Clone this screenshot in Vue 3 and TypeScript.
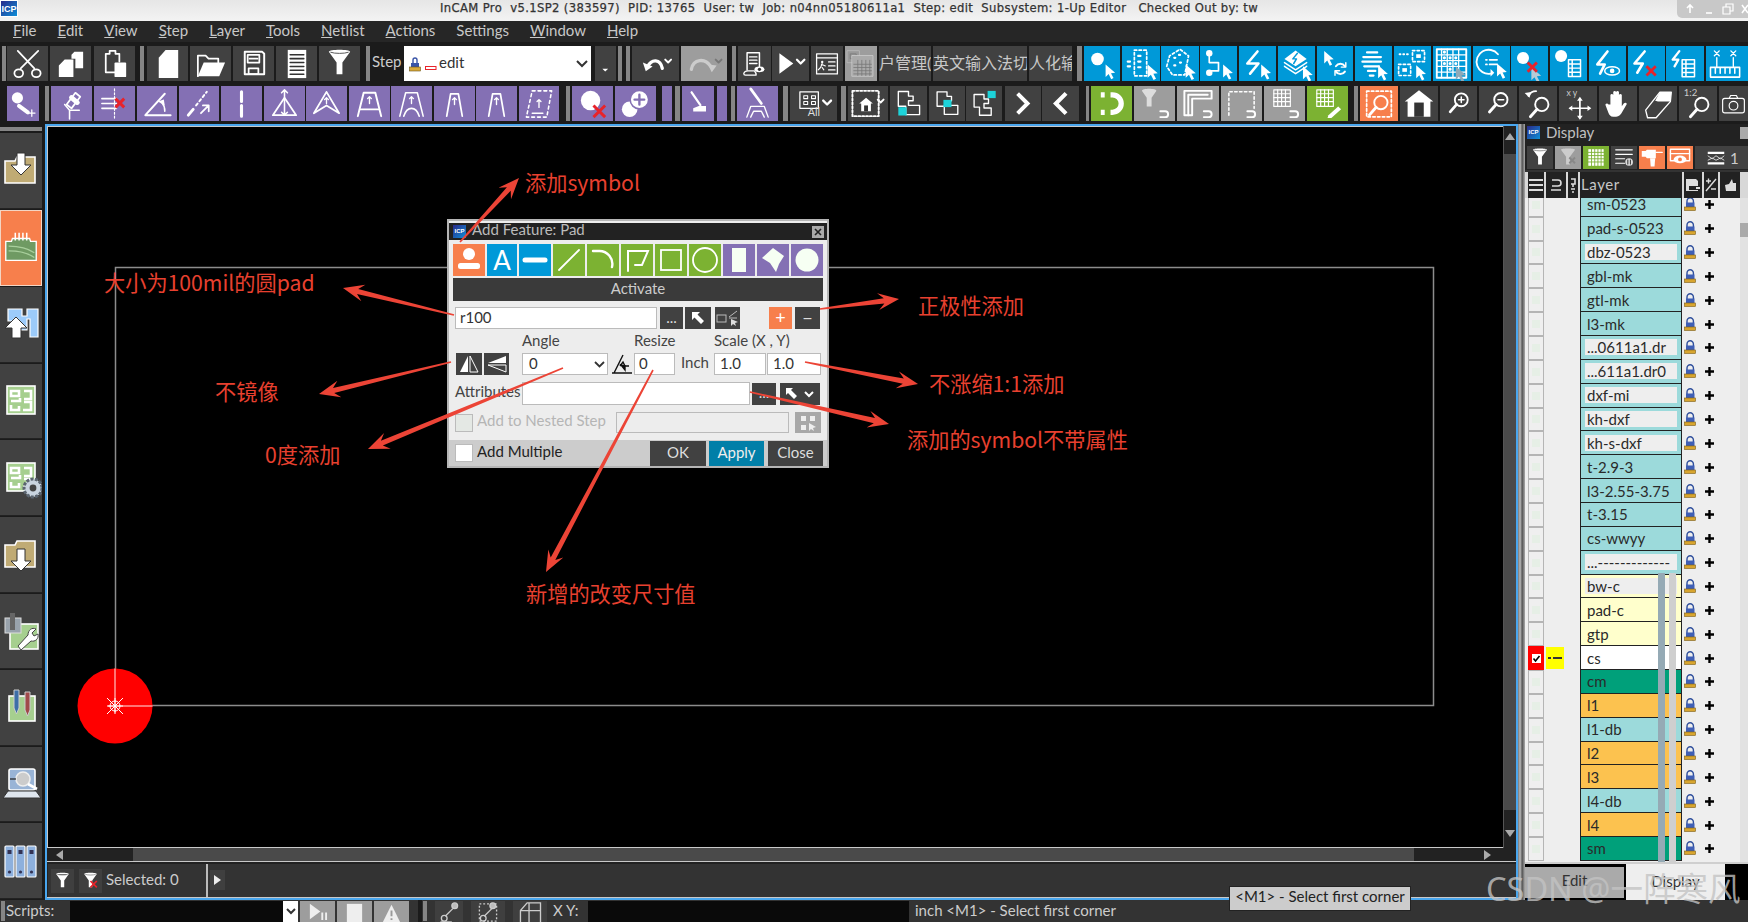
<script setup lang="ts">
type Tool = [number, number, string, string?, string?]

// shared little pieces for the icon strings
const cur = (x: number, y: number, c = '#fff') =>
  `<path d="M${x} ${y}v14l3.4-3.2 2.8 5.6 2.6-1.3-2.8-5.4 4.6-.4z" fill="${c}" stroke="none"/>`
const rx = (x: number, y: number, s = 9) =>
  `<path d="M${x} ${y}l${s} ${s}m0-${s}l-${s} ${s}" stroke="#e8232a" stroke-width="3" stroke-linecap="butt"/>`
const dash = 'stroke-dasharray="2.5 2.5"'
const table = (x: number, y: number) =>
  `<path d="M${x} ${y}h13v18h-13zM${x} ${y + 4.5}h13M${x} ${y + 9}h13M${x} ${y + 13.5}h13M${x + 4} ${y}v18" stroke-width="1.6"/>`
const hook = `<path d="M26 26h5a3 3 0 0 1 0 6h-5" stroke-width="2"/>`
const funnel = `<path d="M9 6c0-3 22-3 22 0l-8 11v12h-6V17z" fill="#fff" stroke="none"/><path d="M11 6.500c4 1.500 14 1.500 18 0" stroke="#555" stroke-width="1"/>`
const trap = (a: string) => `<path d="M12 31l4-23h8l4 23" stroke-width="1.8"/><path d="M${a}" stroke-width="1.3" ${dash}/><path d="M20 19v-7m-2 2l2-2 2 2" stroke-width="1.4"/>`
const lens = (x: number, y: number) =>
  `<circle cx="${x}" cy="${y}" r="7" stroke-width="2"/><path d="M${x - 5} ${y + 5}l-7 8" stroke-width="3"/>`
const folder = '<path d="M5 34V12h10l2-4h18v26z" fill="#c0ab74" stroke="#fff" stroke-width="1.6"/>'
const maze = '<rect x="7" y="6" width="28" height="28" fill="#a6cf8f" stroke="#fff" stroke-width="1.6"/><path d="M11 11h8v5h-8zM24 11h7v8h-7M11 21h9v-3M11 25v5h8v-4M24 22h7v8h-8" stroke="#fff" stroke-width="2.6" fill="none"/>'

const icons: Record<string, string> = {
  // row 1, dark
  scissors: '<path d="M10 5l17 18M31 5L13 23" stroke-width="1.800"/><ellipse cx="11" cy="28" rx="4.5" ry="4" stroke-width="1.800"/><ellipse cx="29" cy="28" rx="4.5" ry="4" stroke-width="1.800"/>',
  copy: '<path d="M14 14h9v18H8V20zM24 6h9v17h-8V13h-4V9z" fill="#fff" stroke="none"/>',
  paste: '<path d="M24 27h-13V8h4V5h6v3h4v8" stroke-width="1.8"/><rect x="20" y="17" width="12" height="15" rx="1" fill="#fff" stroke="none"/>',
  newdoc: '<path d="M18 4h13v29H11V12z" fill="#fff" stroke="none"/>',
  open: '<path d="M7 31V10h8l3 3h10v4" stroke-width="1.8"/><path d="M7 31l6-14h22l-6 14z" fill="#fff" stroke="none"/>',
  save: '<path d="M11 6h18l2 2v21H11z" stroke-width="2"/><path d="M14 9h12v8H14zM15 23h10v6H15z" stroke-width="1.8"/><path d="M16 13h8"/>',
  listdoc: '<rect x="11" y="4" width="19" height="29" fill="#fff" stroke="none"/><path d="M13.5 9h14M13.5 13h14M13.5 17h14M13.5 21h14M13.5 25h14M13.5 29h14" stroke="#333" stroke-width="1.6"/>',
  filter: funnel,
  undo: '<path d="M7 17l3 9 7-5z" fill="#fff" stroke="none"/><path d="M12 21c4-8 13-8 15 2" stroke-width="3.4"/><path d="M30 14l3 3 3-3"/>',
  redo: '<path d="M24 19l4 8 5-7z" fill="#ccc" stroke="none"/><path d="M7 24c2-11 14-12 20-3" stroke="#ccc" stroke-width="3.4"/><path d="M32 14l3 3 3-3" stroke="#777"/>',
  scripteye: '<path d="M11 26V5h15v19" stroke-width="1.8"/><path d="M14 10h9M14 14h9M14 18h9M7 30c1-3 3-3 5-3h8c2 2 2 4 2 5H9c-2 0-2-1-2-2z" stroke-width="1.6"/><ellipse cx="26" cy="25" rx="6" ry="3.5" fill="#fff" stroke="none"/><circle cx="26" cy="25" r="2" fill="#333" stroke="none"/>',
  play: '<path d="M8 7l15 11-15 11z" fill="#fff" stroke="none"/><path d="M27 14l4 4 4-4" stroke-width="2.4"/>',
  runwin: '<rect x="7" y="6" width="26" height="25" stroke-width="1.6"/><path d="M7 11h26M22 16h8M22 21h8M22 26h8" stroke-width="1.6"/><circle cx="14" cy="16" r="1.5" fill="#fff" stroke="none"/><path d="M14 18l-2 5-3 3m5-3l2 3m-3-7l5 2" stroke-width="1.4"/>',
  sheets: '<rect x="3" y="2" width="15" height="15" fill="#999" stroke="#bbb" stroke-width="1"/><path d="M7 6h7v6H7z" stroke="#777" stroke-width="1"/><rect x="9" y="8" width="26" height="26" fill="#aaa" stroke="#ccc" stroke-width="1"/><path d="M11 19h22M11 23h22M11 27h22M11 31h22M16 14v19M21 14v19M26 14v19M31 14v19" stroke="#777" stroke-width="1"/>',
  // row 1, blue
  b1: `<circle cx="15" cy="13" r="7" fill="#fff" stroke="none"/>${cur(24, 19)}`,
  b2: `<rect x="13" y="4" width="13" height="27" stroke-width="1.8" ${dash}/><path d="M17 10h5M17 16h5M17 22h5M6 16h3M6 21h3" stroke-width="2.2" ${dash}/>${cur(27, 19)}`,
  b3: `<path d="M6 21l3-11 11-7 9 7-4 20H12z" stroke-width="1.8" ${dash}/><path d="M14 12h1M19 9h1M14 20h1M20 17h1" stroke-width="2.4"/>${cur(26, 19)}`,
  b4: `<circle cx="10" cy="7" r="3.5" fill="#fff" stroke="none"/><circle cx="10" cy="28" r="3.5" fill="#fff" stroke="none"/><path d="M10 8v9h10v9h-8" stroke-width="1.8"/>${cur(25, 19)}`,
  b5: `<path d="M20 5l-11 13h12l-9 11" stroke-width="2.800"/>${cur(24, 19)}`,
  b6: `<path d="M7 13l12-9 12 9-12 8z" fill="#fff" stroke="none"/><path d="M21 7l-5 6h4l-3 5" stroke="#0099d8" stroke-width="1.6"/><path d="M7 17l12 8 12-8M7 21l12 8 12-8" stroke-width="1.6"/>${cur(27, 21)}`,
  b7: `${cur(8, 4)}<path d="M21 21a6 6 0 0 1 10 0M31 27a6 6 0 0 1-10 0" stroke-width="2.2"/><path d="M32 17v5h-5M20 31v-5h5" stroke-width="1.6"/>`,
  b8: `<path d="M13 6h11M9 11h19M8 16h20M10 21h16M14 26h8M16 31h4" stroke-width="2.4"/>${cur(25, 20)}`,
  b9: `<rect x="20" y="4" width="13" height="12" stroke-width="1.8" ${dash}/><rect x="5" y="19" width="13" height="12" stroke-width="1.8" ${dash}/><rect x="24" y="8" width="5" height="4" fill="#fff" stroke="none"/><rect x="9" y="23" width="5" height="4" fill="#fff" stroke="none"/><path d="M6 8h1M10 8h1M14 8h1" stroke-width="2"/>${cur(24, 20)}`,
  b10: `<rect x="4" y="3" width="31" height="30" stroke-width="2"/><path d="M9 3v30M15 3v30M21 3v30M27 3v30M4 9h31M4 15h31M4 21h31M4 27h31" stroke-width="1.4"/><path d="M12 6h0M18 12h0M24 12h0M12 12h0M18 18h0M24 18h0M12 18h0M18 24h0" stroke-width="3.4"/>${cur(24, 21, '#8fa9b8')}`,
  b11: `<path d="M27 8A13 13 0 1 0 19 29" stroke-width="2"/><path d="M14 14h1M14 19h1M18 14h8M18 19h8" stroke-width="2"/><path d="M19 24v8l4-4z" fill="#fff" stroke="none"/>${cur(26, 18)}`,
  b12: `<circle cx="13" cy="12" r="6.5" fill="#fff" stroke="none"/>${cur(22, 22, '#b5cad6')}${rx(18, 17, 10)}`,
  b13: `<circle cx="12" cy="10" r="6.5" fill="#fff" stroke="none"/>${table(20, 14)}`,
  b14: `<path d="M20 5L9 19h8l-5 10" stroke-width="2.8"/><ellipse cx="25" cy="26" rx="8" ry="4.5" stroke-width="1.6"/><circle cx="25" cy="26" r="2.5" fill="#fff" stroke="none"/>`,
  b15: `<path d="M18 5L7 18h9l-6 10" stroke-width="2.8"/>${rx(20, 21, 10)}`,
  b16: `<path d="M14 5L7 14h6l-4 7" stroke-width="2.4"/>${table(17, 14)}`,
  b17: '<path d="M7 5l5 5m0-5l-5 5M24 5l5 5m0-5l-5 5M9.5 12v9M26.5 12v9" stroke-width="1.4"/><rect x="3" y="22" width="30" height="10" stroke-width="1.6"/><path d="M8 23v5M13 23v5M18 23v5M23 23v5M28 23v5" stroke-width="1.6"/>',
  // row 2, purple
  p1: '<circle cx="13" cy="11" r="7" fill="#fff" stroke="none"/><path d="M15 21l11 8" stroke-width="5"/><path d="M31 26v8m-4-4h8" stroke-width="1.6"/>',
  p2: '<path d="M15 19l9-12 5 4-9 12z" stroke-width="1.8"/><path d="M20 12l6 5" stroke-width="5"/><path d="M13 19l5 6h10M18 25v9" stroke-width="1.6"/>',
  p3: '<path d="M7 13h15M7 18h15M7 23h15" stroke-width="1.6"/><path d="M20 3v30" stroke-width="1.2" stroke-dasharray="2 2"/>' + rx(21, 13, 9),
  p4: '<path d="M8 30L28 8M8 30h26" stroke-width="2"/><path d="M25 17a13 13 0 0 1 3 9" stroke-width="1.6"/><path d="M21 16l6-2 1 6z" fill="#fff" stroke="none"/>',
  p5: '<path d="M9 30l5-6" stroke-width="3"/><path d="M17 20l11-14" stroke-width="2" stroke-dasharray="2.5 3"/><path d="M22 28l8-8m-6 0h6v6" stroke-width="1.8"/>',
  p6: '<path d="M20 6v10M20 20v11" stroke-width="3.2"/>',
  p7: '<path d="M8 30L20 12l12 18z" stroke-width="1.8"/><path d="M20 4v26m-3-23l3-3 3 3m-6 20l3 3 3-3" stroke-width="1.6"/>',
  p8: '<path d="M7 28L20 6l13 22-13-8z" stroke-width="1.8"/><path d="M20 18v-6m-2 2l2-2 2 2" stroke-width="1.4"/>',
  p9: '<path d="M8 31l6-24h12l6 24" stroke-width="2"/><path d="M10 24h20" stroke-width="1.8"/><path d="M20 18v-7m-2 2l2-2 2 2" stroke-width="1.4"/>',
  p10: '<path d="M8 31c2-8 4-16 6-24h12c2 8 4 16 6 24M12 31c2-6 4-8 8-8s6 2 8 8" stroke-width="1.6"/><path d="M20 18v-7m-2 2l2-2 2 2" stroke-width="1.4"/>',
  p11: trap('M7 4v27M33 4v27'),
  p12: trap('M10 4l-3 27M30 4l3 27'),
  p13: '<path d="M13 5h20l-5 27H7z" stroke-width="1.6" stroke-dasharray="3 3"/><path d="M20 22v-8m-2 2l2-2 2 2M13 28h11" stroke-width="1.4"/>',
  p14: `<circle cx="18" cy="15" r="10" fill="#fff" stroke="none"/>${rx(21, 20, 12)}`,
  p15: '<circle cx="14" cy="24" r="8" fill="#fff" stroke="none"/><circle cx="24" cy="14" r="9.5" fill="#fff" stroke="#8470b4" stroke-width="1.6"/><path d="M24 9v10m-5-5h10" stroke="#8470b4" stroke-width="2.4"/>',
  p16: '<path d="M12 4l11 16" stroke-width="2.8"/><path d="M21 21h9v7H14v-4z" fill="#fff" stroke="none"/>',
  p17: '<path d="M13 3l11 15" stroke-width="2.8"/><path d="M9 32l4-11h14l4 11M13 32l3-6h8l3 6" stroke-width="1.4"/>',
  // row 2, dark
  all: '<rect x="6" y="6" width="19" height="17" stroke-width="1.3"/><path d="M10 10h4v3h-4zM18 10h4v3h-4zM10 16h4v3h-4zM18 16h4v3h-4z" stroke-width="1.1"/><text x="14" y="31" font-family="Lato" font-size="11" fill="#ddd" stroke="none">All</text><path d="M30 15l4 4 4-4" stroke-width="2.4"/>',
  house: '<rect x="4" y="5" width="27" height="26" stroke-width="2" stroke-dasharray="2 2"/><path d="M11 18l7-6 7 6-2 0v8H13v-8z" fill="#fff" stroke="none"/><rect x="16" y="20" width="4" height="6" fill="#333" stroke="none"/><path d="M30 14l3 3 3-3" stroke-width="2"/>',
  f1: '<path d="M9 5h11v5h5v5h-5v5h12v10H17v-9H9z" stroke-width="1.5"/><rect x="9" y="22" width="9" height="9" fill="#1dd3d9" stroke="none"/>',
  f2: '<path d="M9 5h11v5h5v5h-5v5h12v10H17v-9H9z" stroke-width="1.5"/><rect x="16" y="14" width="9" height="8" fill="#1dd3d9" stroke="none"/>',
  f3: '<path d="M9 8h11v5h5v5h-5v5h8v8H15v-9H9z" stroke-width="1.5"/><rect x="24" y="4" width="9" height="8" fill="#1dd3d9" stroke="none"/>',
  next: '<path d="M14 7l11 11-11 11" stroke-width="4.4" stroke-linecap="butt" stroke-linejoin="miter"/>',
  prev: '<path d="M26 7L15 18l11 11" stroke-width="4.4" stroke-linecap="butt" stroke-linejoin="miter"/>',
  magnet: '<path d="M19 9h2a9 9 0 0 1 0 18h-2M9 9h4M9 27h4" stroke-width="5.4" stroke-linecap="butt"/>',
  g1: `<path d="M7 5c0-3 15-3 15 0l-5 7v9h-5v-9z" fill="#ddd" stroke="none"/>${hook}`,
  g2: `<path d="M6 30V5h28v8H14v17z" stroke-width="2"/><path d="M10 30V9h20" stroke-width="2"/>${hook}`,
  g3: `<path d="M7 30V6h26v17" stroke-width="1.6" ${dash}/>${hook}`,
  g4: `<rect x="9" y="4" width="17" height="17" stroke-width="1.2"/><path d="M9 8h17M9 12h17M9 16h17M13 4v17M17 4v17M21 4v17" stroke-width="1.2"/>${hook}`,
  g5: '<rect x="9" y="4" width="17" height="17" stroke-width="1.2"/><path d="M9 8h17M9 12h17M9 16h17M13 4v17M17 4v17M21 4v17" stroke-width="1.2"/><path d="M21 30l10-9 3 3-10 9h-4z" fill="#fff" stroke="none"/>',
  // row 2, view tools
  zoomwin: `<rect x="7" y="5" width="26" height="27" stroke-width="1.8" ${dash}/>${lens(22, 17)}`,
  home: '<path d="M5 16L20 4l15 12-3 0v16H8V16z" fill="#fff" stroke="none"/><rect x="15" y="17" width="10" height="15" fill="#333" stroke="none"/>',
  zoomin: `${lens(23, 14)}<path d="M23 11v6m-3-3h6" stroke-width="1.6"/>`,
  zoomout: `${lens(23, 14)}<path d="M20 14h6" stroke-width="1.6"/>`,
  zoomback: `${lens(24, 19)}<path d="M10 10a9 9 0 0 1 8-5" stroke-width="1.8"/><path d="M6 7l5 5 2-6z" fill="#fff" stroke="none"/>`,
  move: '<text x="8" y="10" font-family="Lato" font-size="9" fill="#ccc" stroke="none">x y</text><path d="M22 13v20M12 23h20" stroke-width="1.8"/><path d="M22 11l-3 4h6zM22 35l-3-4h6zM10 23l4-3v6zM34 23l-4-3v6z" fill="#fff" stroke="none"/>',
  hand: '<path d="M12 19V9a1.6 1.6 0 0 1 3 0v6V6a1.6 1.6 0 0 1 3 0v9V6a1.6 1.6 0 0 1 3 0v9V9a1.6 1.6 0 0 1 3 0v12l2-3c2-2 4 0 3 1l-4 7c-2 4-4 6-7 6h-3c-3 0-4-2-5-4l-3-8c-1-2 2-3 3-1z" fill="#fff" stroke="none"/>',
  eraser: '<path d="M7 25L22 6h12l-1 10-15 17H9z" stroke-width="1.4"/><path d="M22 6h12l-1 10H20l-3-1z" fill="#fff" stroke="none"/>',
  ratio: `<text x="5" y="10" font-family="Lato" font-size="10" fill="#ccc" stroke="none">1:2</text>${lens(24, 19)}`,
  camera: '<rect x="5" y="11" width="30" height="20" rx="3" stroke-width="1.6"/><path d="M14 11l2-4h8l2 4" stroke-width="1.6"/><circle cx="20" cy="21" r="6" stroke-width="1.6"/>',
  drop: '<path d="M14 28h11l-5.5 5z" fill="#fff" stroke="none"/>',
}

const sideIcons = [
  `${folder}<path d="M17 4h8v12h6L21 26 11 16h6z" fill="#fff" stroke="#333" stroke-width="1"/>`,
  '<path d="M5 14h6l1-3h18l1 3h6v20H5z" fill="#6f9a63" stroke="#fff" stroke-width="1.4"/><path d="M15 5v8M19 5v8M23 5v8M27 5v8" stroke="#fff" stroke-width="1.6"/><path d="M8 19c10 0 20 2 27 7M8 24c10 0 20 2 27 7" stroke="#a9cf9d" stroke-width="1.4" fill="none"/>',
  '<path d="M8 6h14v7h5V6h11v28h-8V16h-3v11h-9V16h-4v2H8z" fill="#9ccbfa" stroke="#fff" stroke-width="1.2"/><path d="M16 14l11 11h-6v10h-9V25H5z" fill="#fff" stroke="#333" stroke-width="1"/>',
  maze,
  `${maze}<circle cx="33" cy="31" r="9" fill="#c9d4df" stroke="#5b6570" stroke-width="3" stroke-dasharray="3 1.4"/><circle cx="33" cy="31" r="3.4" fill="#444"/>`,
  `${folder}<path d="M17 16h8v12h6L21 38 11 28h6z" fill="#fff" stroke="#333" stroke-width="1"/>`,
  '<rect x="10" y="14" width="28" height="25" fill="#a6cf8f" stroke="#fff" stroke-width="1.6"/><rect x="5" y="8" width="16" height="15" fill="#99a3ad" stroke="#ddd" stroke-width="1"/><path d="M10 3h5v17h-5z" fill="#666"/><path d="M18 36l10-11c0-5 4-8 8-6l-4 4 2 3 4-2c1 5-3 8-7 7l-10 9z" fill="#fff" stroke="#444" stroke-width="1"/>',
  '<rect x="9" y="10" width="26" height="25" fill="#a6cf8f" stroke="#fff" stroke-width="1.6"/><path d="M14 4h5v18l-2.500 6-2.500-6z" fill="#3d6ea8" stroke="#ccc" stroke-width="1"/><path d="M25 6h5v18l-2.500 6-2.500-6z" fill="#a04a4a" stroke="#ccc" stroke-width="1"/>',
  '<rect x="9" y="6" width="26" height="21" rx="2" fill="#99b4d6" stroke="#fff" stroke-width="1.6"/><path d="M3 35l5-7h28l5 7z" fill="#dfe6ee" stroke="#333" stroke-width="1"/><circle cx="23" cy="16" r="7" fill="#ccc" stroke="#eee" stroke-width="1.6"/><path d="M28 21l9 5" stroke="#fff" stroke-width="2.6"/><path d="M10 16h6" stroke="#222" stroke-width="1.2"/>',
  '<g fill="#8db0dd" stroke="#fff" stroke-width="1.2"><rect x="5" y="6" width="9" height="31" rx="1"/><rect x="16" y="6" width="9" height="31" rx="1"/><rect x="27" y="6" width="9" height="31" rx="1"/></g><g fill="#335"><rect x="7.500" y="10" width="4" height="4"/><rect x="18.500" y="10" width="4" height="4"/><rect x="29.500" y="10" width="4" height="4"/><circle cx="9.500" cy="32" r="1.600"/><circle cx="20.500" cy="32" r="1.600"/><circle cx="31.500" cy="32" r="1.600"/></g>',
]

const flow = (list: Tool[]) => {
  let p = 0
  return list.map(([x, e, kind, icon, text]) => {
    const style = { marginLeft: `${x - p}px`, width: `${e - x}px` }
    p = e
    return { kind, icon, text, style, key: x }
  })
}

const rowA = flow([
  [2, 6, 'grip'],
  [7, 48, 'dark', 'scissors'], [50, 91, 'dark', 'copy'], [94, 135, 'dark', 'paste'],
  [140, 144, 'grip'],
  [147, 188, 'dark', 'newdoc'], [190, 231, 'dark', 'open'], [233, 274, 'dark', 'save'], [276, 317, 'dark', 'listdoc'], [319, 360, 'dark', 'filter'],
  [366, 370, 'grip'],
  [372, 402, 'label', undefined, 'Step'],
  [404, 591, 'combo', undefined, 'edit'],
  [595, 616, 'dark', 'drop'],
  [618, 622, 'grip'], [626, 630, 'grip'],
  [632, 679, 'dark', 'undo'], [681, 727, 'gray', 'redo'],
  [732, 736, 'grip'],
  [738, 771, 'dark', 'scripteye'], [772, 809, 'dark', 'play'], [811, 843, 'dark', 'runwin'], [845, 877, 'gray', 'sheets'],
  [879, 931, 'cjk', undefined, '户管理('], [933, 1027, 'cjk', undefined, '英文输入法切'], [1029, 1072, 'cjk', undefined, '人化输入'],
  [1077, 1082, 'grip'],
  [1084, 1120, 'blue', 'b1'], [1122, 1160, 'blue', 'b2'], [1161, 1199, 'blue', 'b3'], [1200, 1237, 'blue', 'b4'],
  [1239, 1276, 'blue', 'b5'], [1278, 1315, 'blue', 'b6'], [1317, 1353, 'blue', 'b7'], [1355, 1392, 'blue', 'b8'],
  [1394, 1431, 'blue', 'b9'], [1433, 1471, 'blue', 'b10'], [1473, 1510, 'blue', 'b11'], [1511, 1548, 'blue', 'b12'],
  [1550, 1587, 'blue', 'b13'], [1589, 1626, 'blue', 'b14'], [1628, 1665, 'blue', 'b15'], [1666, 1704, 'blue', 'b16'],
  [1706, 1748, 'blue', 'b17'],
])

const rowB = flow([
  [7, 39, 'purple', 'p1'],
  [45, 49, 'grip'],
  [51, 92, 'purple', 'p2'], [94, 135, 'purple', 'p3'], [137, 177, 'purple', 'p4'], [179, 219, 'purple', 'p5'],
  [221, 262, 'purple', 'p6'], [264, 305, 'purple', 'p7'], [306, 347, 'purple', 'p8'], [349, 390, 'purple', 'p9'],
  [391, 432, 'purple', 'p10'], [434, 475, 'purple', 'p11'], [476, 517, 'purple', 'p12'], [519, 559, 'purple', 'p13'],
  [566, 570, 'grip'],
  [572, 613, 'purple', 'p14'], [615, 656, 'purple', 'p15'], [662, 672, 'purple'],
  [675, 680, 'grip'],
  [682, 714, 'purple', 'p16'], [717, 727, 'purple'],
  [731, 735, 'grip'],
  [737, 778, 'purple', 'p17'],
  [783, 788, 'grip'],
  [790, 837, 'dark', 'all'],
  [841, 846, 'grip'],
  [848, 888, 'dark', 'house'], [890, 927, 'dark', 'f1'], [929, 965, 'dark', 'f2'], [966, 1002, 'dark', 'f3'],
  [1005, 1041, 'dark', 'next'], [1042, 1079, 'dark', 'prev'],
  [1086, 1089, 'grip'],
  [1091, 1132, 'green', 'magnet'], [1134, 1175, 'gray', 'g1'], [1177, 1219, 'gray', 'g2'], [1221, 1262, 'gray', 'g3'],
  [1264, 1305, 'gray', 'g4'], [1307, 1348, 'green', 'g5'],
  [1354, 1358, 'grip'],
  [1360, 1398, 'orange', 'zoomwin'], [1400, 1438, 'dark', 'home'], [1440, 1477, 'dark', 'zoomin'], [1479, 1517, 'dark', 'zoomout'],
  [1519, 1557, 'dark', 'zoomback'], [1559, 1597, 'dark', 'move'], [1599, 1637, 'dark', 'hand'], [1639, 1677, 'dark', 'eraser'],
  [1679, 1717, 'dark', 'ratio'], [1719, 1748, 'dark', 'camera'],
])

const menus = [
  ['F', 'ile', 13], ['E', 'dit', 21], ['V', 'iew', 21], ['S', 'tep', 21], ['L', 'ayer', 21], ['T', 'ools', 21],
  ['N', 'etlist', 21], ['A', 'ctions', 21], ['', 'Settings', 21], ['W', 'indow', 21], ['H', 'elp', 21],
]

const features: [string, string][] = [
  ['orange', 'symbol'], ['blue', 'A'], ['blue', 'bar'], ['green', 'line'], ['green', 'arc'], ['green', 'poly'],
  ['green', 'square'], ['green', 'ring'], ['purple', 'rect'], ['purple', 'blob'], ['purple', 'disc'],
]
const featureIcons: Record<string, string> = {
  symbol: '<circle cx="16" cy="10" r="6" fill="#fff" stroke="none"/><rect x="5" y="19" width="22" height="6" rx="2.500" fill="#fff" stroke="none"/>',
  bar: '<path d="M6 16h20" stroke-width="5"/>',
  line: '<path d="M6 26L26 6" stroke-width="1.8"/>',
  arc: '<path d="M6 7h6a13 13 0 0 1 13 16" stroke-width="2.4"/>',
  poly: '<path d="M7 27V7h20l-6 14H14" stroke-width="2"/>',
  square: '<rect x="6" y="6" width="20" height="20" stroke-width="1.8"/>',
  ring: '<circle cx="16" cy="16" r="12" stroke-width="1.8"/>',
  rect: '<rect x="9" y="4" width="14" height="24" fill="#f6fff3" stroke="none"/>',
  blob: '<path d="M5 14L16 4l11 8-5 8-3 8-6-9z" fill="#f6fff3" stroke="none"/>',
  disc: '<circle cx="16" cy="16" r="11.500" fill="#f6fff3" stroke="none"/>',
}

interface LayerRow { name: string; tone: string; plate?: boolean; active?: boolean }
const layers: LayerRow[] = [
  { name: 'sm-0523', tone: 'teal' }, { name: 'pad-s-0523', tone: 'teal' }, { name: 'dbz-0523', tone: 'teal', plate: true },
  { name: 'gbl-mk', tone: 'teal' }, { name: 'gtl-mk', tone: 'teal' }, { name: 'l3-mk', tone: 'teal' },
  { name: '...0611a1.dr', tone: 'teal', plate: true }, { name: '...611a1.dr0', tone: 'teal', plate: true },
  { name: 'dxf-mi', tone: 'teal', plate: true }, { name: 'kh-dxf', tone: 'teal', plate: true }, { name: 'kh-s-dxf', tone: 'teal', plate: true },
  { name: 't-2.9-3', tone: 'teal' }, { name: 'l3-2.55-3.75', tone: 'teal' }, { name: 't-3.15', tone: 'teal' }, { name: 'cs-wwyy', tone: 'teal' },
  { name: '...-------------', tone: 'teal', plate: true }, { name: 'bw-c', tone: 'cream', plate: true }, { name: 'pad-c', tone: 'cream' }, { name: 'gtp', tone: 'cream' },
  { name: 'cs', tone: 'white', active: true }, { name: 'cm', tone: 'sea' }, { name: 'l1', tone: 'amber' }, { name: 'l1-db', tone: 'teal' },
  { name: 'l2', tone: 'amber' }, { name: 'l3', tone: 'amber' }, { name: 'l4-db', tone: 'teal' }, { name: 'l4', tone: 'amber' }, { name: 'sm', tone: 'sea' },
]

const panelTools = [
  { c: 'dark', i: funnel },
  { c: 'gray', i: `<path d="M9 6c0-3 22-3 22 0l-8 11v12h-6V17z" fill="#ccc" stroke="none"/>${rx(22, 18, 9).replace('#e8232a', '#888')}` },
  { c: 'green', i: '<rect x="8" y="5" width="24" height="26" fill="#fff" stroke="none"/><path d="M8 10h24M8 15h24M8 20h24M8 25h24M13 5v26M18 5v26M23 5v26M28 5v26" stroke="#7cb232" stroke-width="1.4"/>' },
  { c: 'dark', i: '<path d="M7 6h26M7 13h26M7 20h14M7 27h14" stroke-width="1.8"/><circle cx="28" cy="25" r="6" fill="#ddd" stroke="none"/><path d="M26 22v6M30 22v6" stroke="#333" stroke-width="1.6"/>' },
  { c: 'orange', i: '<path d="M4 8h6l2-2h14v13H12l-2-2H4z" fill="#fff" stroke="none"/><path d="M26 10h10" stroke-width="2"/><path d="M17 19h8l-1 13h-6z" fill="#fff" stroke="none"/>' },
  { c: 'orange', i: '<rect x="5" y="5" width="30" height="18" stroke-width="2.2"/><path d="M5 12h30" stroke-width="2"/><ellipse cx="20" cy="21" rx="10" ry="6" fill="#fff" stroke="none"/><circle cx="20" cy="21" r="3" fill="#f77f4c" stroke="none"/>' },
]

// the red callouts lie over everything, so they stay at their own coordinates
const notes = [
  { t: '添加symbol', x: 525, y: 182 },
  { t: '大小为100mil的圆pad', x: 104, y: 282 },
  { t: '正极性添加', x: 918, y: 305 },
  { t: '不镜像', x: 215, y: 391 },
  { t: '不涨缩1:1添加', x: 929, y: 383 },
  { t: '添加的symbol不带属性', x: 907, y: 439 },
  { t: '0度添加', x: 265, y: 454 },
  { t: '新增的改变尺寸值', x: 526, y: 593 },
]

const arrow = (x0: number, y0: number, x1: number, y1: number) => {
  const l = Math.hypot(x1 - x0, y1 - y0)
  const dx = (x1 - x0) / l
  const dy = (y1 - y0) / l
  const px = -dy
  const py = dx
  const neck = (h: number, w: number) => [x1 - dx * h + px * w, y1 - dy * h + py * w]
  const pts = [
    [x0 + px * 0.8, y0 + py * 0.8], neck(15, 2.6), neck(21, 8.5), [x1, y1],
    neck(21, -8.5), neck(15, -2.6), [x0 - px * 0.8, y0 - py * 0.8],
  ]
  return pts.map((p) => p.map((n) => n.toFixed(1)).join(',')).join(' ')
}

const arrows = [
  arrow(460, 242, 519, 178),
  arrow(454, 315, 343, 288),
  arrow(820, 309, 899, 299),
  arrow(451, 362, 319, 394),
  arrow(563, 368, 368, 449),
  arrow(653, 370, 546, 572),
  arrow(805, 362, 918, 384),
  arrow(750, 392, 889, 424),
]
</script>

<template>
  <div class="app">
    <header class="titlebar">
      <div class="logo">ICP</div>
      <div class="title">InCAM Pro&nbsp; v5.1SP2 (383597)&nbsp; PID: 13765&nbsp; User: tw&nbsp; Job: n04nn05180611a1&nbsp; Step: edit&nbsp; Subsystem: 1-Up Editor&nbsp;&nbsp; Checked Out by: tw</div>
      <div class="winbtns">
        <svg width="71" height="18" viewBox="0 0 71 18" fill="none" stroke="#fff" stroke-width="1.600">
          <path d="M13 13V5m-3 3l3-3 3 3" />
          <path d="M29 13h6" />
          <path d="M46 7h7v7h-7zM49 7V4h7v7h-3" stroke-width="1.200" />
          <path d="M65 5l6 8m0-8l-6 8" />
        </svg>
      </div>
    </header>

    <nav class="menubar">
      <span v-for="m in menus" :key="String(m[1])" class="menu" :style="{ marginLeft: m[2] + 'px' }"><u>{{ m[0] }}</u>{{ m[1] }}</span>
    </nav>

    <div class="toolrow row-a">
      <template v-for="t in rowA" :key="t.key">
        <div v-if="t.kind === 'grip'" class="grip" :style="t.style"></div>
        <div v-else-if="t.kind === 'label'" class="step-label" :style="t.style">{{ t.text }}</div>
        <div v-else-if="t.kind === 'combo'" class="step-combo" :style="t.style">
          <svg class="combo-mark" width="28" height="16" viewBox="0 0 28 16">
            <rect x="2" y="7" width="8" height="6" fill="#3a55a8" />
            <path d="M4 7V4a2 2 0 0 1 4 0v3" fill="none" stroke="#3a55a8" stroke-width="1.400" />
            <rect x="0.500" y="11" width="11" height="4" fill="#d9a93a" stroke="#6b5518" stroke-width="0.600" />
            <rect x="16.500" y="10.500" width="10.500" height="3" fill="none" stroke="#e8232a" />
          </svg>
          <span>{{ t.text }}</span>
          <svg class="combo-chev" width="12" height="8" viewBox="0 0 12 8"><path d="M1 1l5 5 5-5" fill="none" stroke="#333" stroke-width="2" /></svg>
        </div>
        <div v-else-if="t.kind === 'cjk'" class="cjk-btn" :style="t.style"><span>{{ t.text }}</span></div>
        <div v-else class="tbtn" :class="t.kind" :style="t.style">
          <svg v-if="t.icon" viewBox="0 0 40 36" fill="none" stroke="#fff" stroke-width="2" stroke-linecap="round" stroke-linejoin="round" v-html="icons[t.icon]"></svg>
        </div>
      </template>
    </div>

    <div class="toolrow row-b">
      <template v-for="t in rowB" :key="t.key">
        <div v-if="t.kind === 'grip'" class="grip" :style="t.style"></div>
        <div v-else class="tbtn" :class="t.kind" :style="t.style">
          <svg v-if="t.icon" viewBox="0 0 40 36" fill="none" stroke="#fff" stroke-width="2" stroke-linecap="round" stroke-linejoin="round" v-html="icons[t.icon]"></svg>
        </div>
      </template>
    </div>

    <main class="main">
      <aside class="sidebar">
        <div class="side-grip"></div>
        <div v-for="(s, i) in sideIcons" :key="i" class="side-btn" :class="{ on: i === 1 }">
          <svg width="42" height="42" viewBox="0 0 42 42" v-html="s"></svg>
        </div>
      </aside>

      <section class="work">
        <div class="work-top">
          <div class="canvas">
            <svg class="board" viewBox="0 0 1454 720" preserveAspectRatio="none">
              <rect x="67.500" y="140.500" width="1318" height="438" fill="none" stroke="#8c8c8c" stroke-width="1.500" />
              <circle cx="67" cy="579" r="37.500" fill="#ff0000" />
              <path d="M67 541.500v44M60 579h44.500" stroke="#ff9c9c" stroke-width="1.500" />
              <g fill="none" stroke="#fff" stroke-width="1">
                <circle cx="67" cy="579" r="5" />
                <path d="M59 571l16 16M75 571l-16 16M59 579h16M67 571v16" />
              </g>
            </svg>
          </div>
          <div class="vscroll">
            <i class="arrow-up"></i>
            <div class="vthumb"></div>
            <i class="arrow-down"></i>
          </div>
        </div>
        <div class="hscroll">
          <i class="arrow-left"></i>
          <div class="hthumb"></div>
          <i class="arrow-right"></i>
        </div>
        <div class="selbar">
          <div class="sel-box">
            <div class="sel-btn"><svg viewBox="0 0 40 36" v-html="icons.filter"></svg></div>
            <div class="sel-btn"><svg viewBox="0 0 40 36" fill="none" v-html="icons.filter + rx(20, 18, 11)"></svg></div>
            <span class="sel-text">Selected: 0</span>
          </div>
          <div class="sel-more"><i class="arrow-next"></i></div>
        </div>
      </section>

      <div class="splitter"></div>

      <aside class="panel">
        <div class="panel-title">
          <div class="logo small">ICP</div>
          <span>Display</span>
          <i class="panel-close"></i>
        </div>
        <div class="panel-tools">
          <div v-for="(p, i) in panelTools" :key="i" class="ptool" :class="p.c">
            <svg viewBox="0 0 40 36" fill="none" stroke="#fff" stroke-width="2" stroke-linecap="round" stroke-linejoin="round" v-html="p.i"></svg>
          </div>
          <div class="ptool wide">
            <svg width="18" height="16" viewBox="0 0 24 18" fill="none" stroke="#fff"><path d="M1 2h22M1 16h22" stroke-width="3" /><path d="M1 6l6 4 5-4 6 4 5-4M1 12l6-3 5 3 6-3 5 3" stroke-width="1" /></svg>
            <span>1</span>
          </div>
        </div>
        <div class="layer-head">
          <div class="hcell c1"><svg width="16" height="14" viewBox="0 0 16 14" fill="none" stroke="#ddd"><path d="M1 2h14M1 7h14M1 12h14" stroke-width="2" /></svg></div>
          <div class="hcell c2"><svg width="14" height="14" viewBox="0 0 14 14" fill="none" stroke="#ddd" stroke-width="1.600"><path d="M3 2h6a3 3 0 0 1 0 6H3M2 12h10" /></svg></div>
          <div class="hcell c3"><svg width="8" height="16" viewBox="0 0 8 16" fill="none" stroke="#ddd" stroke-width="1.600"><path d="M2 2h4v5H2M4 7v3M2 12h4M3 15h2" /></svg></div>
          <div class="hcell c4">Layer</div>
          <div class="hcell c5"><svg width="16" height="14" viewBox="0 0 16 14"><path d="M1 1h10l2 2v10H1z" fill="#ddd" /><rect x="4" y="8" width="9" height="4" fill="#222" /><rect x="11" y="9" width="4" height="2" fill="#ddd" /></svg></div>
          <div class="hcell c6"><svg width="12" height="16" viewBox="0 0 12 16" fill="none" stroke="#ddd" stroke-width="1.400"><path d="M1 4h5M3.500 1.500v5M11 2L1 14M6 12h5" /></svg></div>
          <div class="hcell c7"><svg width="12" height="12" viewBox="0 0 12 12"><path d="M1 6l4-1 3-5 1 4h3v8H2z" fill="#ddd" /></svg></div>
        </div>
        <div class="layer-list">
          <div class="rows">
            <div v-for="l in layers" :key="l.name" class="lrow">
              <div class="check" :class="{ on: l.active }">
                <svg v-if="l.active" width="9" height="9" viewBox="0 0 9 9"><rect width="9" height="9" fill="#fff" /><path d="M1.500 4.500l2 2.500 4-5" fill="none" stroke="#000" stroke-width="1.600" /></svg>
                <i v-else></i>
              </div>
              <div class="affect">
                <div v-if="l.active" class="affect-on"><svg width="14" height="4" viewBox="0 0 14 4"><path d="M0 2h3M5 2h9" stroke="#333" stroke-width="2" /></svg></div>
              </div>
              <div class="lname" :class="l.tone"><span :class="{ plate: l.plate }">{{ l.name }}</span></div>
              <div class="lock">
                <svg width="13" height="15" viewBox="0 0 13 15">
                  <path d="M3 6V4a3.200 3.200 0 0 1 6.400 0v2" fill="none" stroke="#2f4f9c" stroke-width="1.400" />
                  <rect x="2" y="5.500" width="8.500" height="5" fill="#3f5fb5" />
                  <rect x="0.500" y="10" width="11" height="3.500" fill="#d8a52f" stroke="#7a5a14" stroke-width="0.600" />
                </svg>
              </div>
              <div class="lplus"><svg width="9" height="9" viewBox="0 0 9 9"><path d="M4.500 0v9M0 4.500h9" stroke="#000" stroke-width="2.400" /></svg></div>
            </div>
          </div>
          <div class="over-bar one"></div>
          <div class="over-bar two"></div>
          <div class="list-scroll"><i></i></div>
        </div>
        <div class="tabs">
          <div class="tab">Edit</div>
          <div class="tab cur">Display</div>
        </div>
      </aside>
    </main>

    <footer class="status">
      <div class="grip tiny"></div>
      <span class="scripts">Scripts:</span>
      <div class="script-input"><i class="dd"><svg width="10" height="7" viewBox="0 0 10 7"><path d="M1 1l4 4 4-4" fill="none" stroke="#333" stroke-width="2" /></svg></i></div>
      <div class="sbtn">
        <svg viewBox="0 0 36 22"><path d="M10 3l11 8-11 8z" fill="#eee" /><path d="M23 12v8M27 12v8" stroke="#eee" stroke-width="2" /></svg>
      </div>
      <div class="sbtn"><svg viewBox="0 0 36 22"><rect x="10" y="3" width="16" height="19" fill="#eee" /></svg></div>
      <div class="sbtn"><svg viewBox="0 0 36 22"><path d="M18 4l9 18H9z" fill="#eee" /><path d="M18 10v6M18 18v2" stroke="#999" stroke-width="2" /></svg></div>
      <div class="status-sep"></div>
      <div class="grip tiny"></div>
      <div class="sbtn dark first">
        <svg viewBox="0 0 28 22" fill="none" stroke="#ccc" stroke-width="1.400"><circle cx="20" cy="5" r="3" fill="#bbb" /><path d="M18 8L10 16" /><circle cx="9" cy="18" r="3" /><path d="M5 22h12" /></svg>
      </div>
      <div class="sbtn dark">
        <svg viewBox="0 0 34 22" fill="none" stroke="#ccc" stroke-width="1.400"><rect x="8" y="3" width="18" height="18" stroke-dasharray="2 2" /><circle cx="22" cy="5" r="3" fill="#bbb" /><path d="M21 8L13 16" /><circle cx="12" cy="18" r="3" /></svg>
      </div>
      <div class="sbtn dark">
        <svg viewBox="0 0 34 22" fill="none" stroke="#ccc" stroke-width="1.400"><path d="M7 22V10l7-8h14v20M7 10h21M16 2v20" /></svg>
      </div>
      <span class="xy">X Y:</span>
      <div class="xy-input"></div>
      <span class="hint">inch &lt;M1&gt; - Select first corner</span>
    </footer>

    <div class="tooltip">&lt;M1&gt; - Select first corner</div>

    <div class="dialog">
      <div class="dlg-title">
        <div class="logo small">ICP</div>
        <span>Add Feature: Pad</span>
        <div class="dlg-close"><svg width="8" height="8" viewBox="0 0 8 8"><path d="M1 1l6 6M7 1L1 7" stroke="#222" stroke-width="1.600" /></svg></div>
      </div>
      <div class="feature-row">
        <div v-for="f in features" :key="f[1]" class="fbtn" :class="f[0]">
          <span v-if="f[1] === 'A'">A</span>
          <svg v-else viewBox="0 0 32 32" fill="none" stroke="#fff" stroke-width="2" stroke-linecap="round" v-html="featureIcons[f[1]]"></svg>
        </div>
      </div>
      <div class="activate">Activate</div>
      <div class="d-row r-symbol">
        <div class="field w-symbol">r100</div>
        <div class="dbtn w-dots">...</div>
        <div class="dbtn w-pick"><svg width="16" height="16" viewBox="0 0 16 16"><path d="M2 2h8L7.500 4.500 14 11l-3 3-6.500-6.500L2 10z" fill="#fff" /></svg></div>
        <div class="dbtn w-shape"><svg width="24" height="18" viewBox="0 0 24 18" fill="none" stroke="#bbb"><rect x="1" y="6" width="9" height="7" /><path d="M13 8l8-6M13 9h8" /><path d="M15 10v7l2-2 3 2-1-3 3-1z" fill="#ddd" stroke="none" /></svg></div>
        <div class="dbtn w-plus">+</div>
        <div class="dbtn w-minus">−</div>
      </div>
      <div class="d-row r-labels">
        <span class="lb-angle">Angle</span>
        <span class="lb-resize">Resize</span>
        <span>Scale (X , Y)</span>
      </div>
      <div class="d-row r-values">
        <div class="dbtn w-mir"><svg width="20" height="18" viewBox="0 0 20 18" fill="none" stroke="#fff"><path d="M9 1v16H1z" fill="#fff" stroke="none" /><path d="M11 1v16h8z" /></svg></div>
        <div class="dbtn w-mir2"><svg width="20" height="18" viewBox="0 0 20 18" fill="none" stroke="#fff"><path d="M1 8l18-7v7z" fill="#fff" stroke="none" /><path d="M1 10l18 7v-7z" /></svg></div>
        <div class="field w-angle">
          <span>0</span>
          <svg width="11" height="7" viewBox="0 0 11 7"><path d="M1 1l4.500 4.500L10 1" fill="none" stroke="#333" stroke-width="1.800" /></svg>
        </div>
        <div class="w-aicon"><svg width="21" height="22" viewBox="0 0 21 22" fill="none" stroke="#111" stroke-width="1.400"><path d="M1 20h20M3 20L12 2" /><path d="M9 13l3-4 2 4h4" /><path d="M10 12l4 1 0 4z" fill="#111" /></svg></div>
        <div class="field w-resize">0</div>
        <span class="w-inch">Inch</span>
        <div class="field w-sx">1.0</div>
        <div class="field w-sy">1.0</div>
      </div>
      <div class="d-row r-attr">
        <span class="w-attr">Attributes</span>
        <div class="field w-attrinput"></div>
        <div class="dbtn w-adots">...</div>
        <div class="dbtn w-apick">
          <svg width="30" height="14" viewBox="0 0 30 14" fill="none"><path d="M1 1h7L6 3l6 6-3 3-6-6-2 2z" fill="#fff" /><path d="M20 5l4 4 4-4" stroke="#fff" stroke-width="2" /></svg>
        </div>
      </div>
      <div class="d-row r-nest">
        <div class="cbox off"></div>
        <span class="w-nlabel">Add to Nested Step</span>
        <div class="field w-ninput"></div>
        <div class="dbtn w-nbtn"><svg width="18" height="18" viewBox="0 0 18 18" fill="#eee"><rect x="2" y="2" width="5" height="5" /><rect x="11" y="2" width="5" height="5" /><rect x="2" y="11" width="5" height="5" /><path d="M10 9v8l2-2 3 2-1-3 3-1z" /></svg></div>
      </div>
      <div class="d-row r-bottom">
        <div class="cbox"></div>
        <span class="w-mlabel">Add Multiple</span>
        <div class="dbtn w-ok">OK</div>
        <div class="dbtn w-apply">Apply</div>
        <div class="dbtn w-closebtn">Close</div>
      </div>
    </div>

    <svg class="arrows" width="1748" height="922" viewBox="0 0 1748 922">
      <polygon v-for="(p, i) in arrows" :key="i" :points="p" fill="#ec4436" />
    </svg>
    <span v-for="n in notes" :key="n.t" class="note" :style="{ left: n.x + 'px', top: n.y + 'px' }">{{ n.t }}</span>
    <div class="watermark">CSDN @一阵寒风</div>
  </div>
</template>

<style>
html,
body {
  margin: 0;
  background: #333;
}
</style>

<style scoped>
.app {
  position: relative;
  width: 1748px;
  height: 922px;
  display: flex;
  flex-direction: column;
  overflow: hidden;
  background: #333;
  font-family: "Lato", "Noto Sans CJK SC", sans-serif;
  color: #ccc;
}

.titlebar {
  height: 21px;
  position: relative;
  flex: none;
  background: linear-gradient(#e6e6e6, #f3f3f3);
}
.logo {
  width: 18px;
  height: 17px;
  background: linear-gradient(135deg, #2a2a8a, #0d8fd8);
  color: #fff;
  font: bold 9px/17px "Liberation Sans", sans-serif;
  text-align: center;
  box-sizing: border-box;
  border: 1px solid #fff;
}
.logo.small {
  width: 13px;
  height: 13px;
  font-size: 6px;
  line-height: 12px;
  flex: none;
  border: none;
}
.title {
  position: absolute;
  left: 440px;
  top: 0;
  font: 11.6px/16px "DejaVu Sans", sans-serif;
  letter-spacing: 0.36px;
  -webkit-text-stroke: 0.25px #333;
  color: #333;
  white-space: nowrap;
}
.winbtns {
  position: absolute;
  right: 0;
  top: 0;
  width: 71px;
  height: 18px;
  background: #c8c8c8;
  border-bottom-left-radius: 5px;
}

.menubar {
  height: 21px;
  flex: none;
  display: flex;
  align-items: center;
  box-sizing: border-box;
  padding-bottom: 3px;
  background: #262626;
  font-size: 15px;
  color: #c8c8c8;
}

.toolrow {
  flex: none;
  display: flex;
  align-items: flex-start;
  background: #1b1b1b;
}
.row-a {
  height: 42px;
  padding-top: 4px;
  box-sizing: border-box;
}
.row-b {
  height: 40px;
  padding-top: 2px;
  box-sizing: border-box;
}
.grip {
  height: 35px;
  background: #858585;
  flex: none;
}
.tbtn {
  height: 35px;
  flex: none;
  background: #414141;
}
.tbtn svg {
  display: block;
  width: 100%;
  height: 100%;
}
.dark { background: #414141; }
.gray { background: #9d9d9d; }
.blue { background: #0099d8; }
.purple { background: #8470b4; }
.green { background: #7cb232; }
.orange { background: #f77f4c; }

.step-label {
  height: 35px;
  flex: none;
  line-height: 31px;
  font-size: 15px;
  color: #ccc;
}
.step-combo {
  height: 35px;
  flex: none;
  background: #fff;
  display: flex;
  align-items: center;
  padding: 0 0 3px 5px;
  box-sizing: border-box;
  font-size: 15px;
  color: #333;
}
.combo-mark {
  margin-top: 3px;
}
.step-combo span {
  margin-left: 2px;
}
.combo-chev {
  margin-left: auto;
  margin-right: 3px;
  margin-top: 3px;
}
.cjk-btn {
  height: 35px;
  flex: none;
  background: #414141;
  overflow: hidden;
  white-space: nowrap;
  line-height: 33px;
  font-size: 16px;
  color: #c8c8c8;
}

.main {
  flex: 1;
  min-height: 0;
  display: flex;
  background: #1b1b1b;
}

.sidebar {
  width: 45px;
  flex: none;
  display: flex;
  flex-direction: column;
  padding: 3px 3px 0 0;
  box-sizing: border-box;
}
.side-grip {
  height: 4px;
  background: #858585;
  margin-bottom: 2px;
  flex: none;
}
.side-btn {
  flex: 1;
  display: flex;
  align-items: center;
  justify-content: center;
  background: #414141;
  border-bottom: 1px solid #222;
  box-sizing: border-box;
  margin-bottom: 1px;
}
.side-btn.on {
  background: #f77f4c;
  border: 1px solid #f3d5c4;
}

.work {
  flex: none;
  width: 1473px;
  box-sizing: border-box;
  border: 2px solid #49a6ee;
  display: flex;
  flex-direction: column;
  background: #333;
}
.work-top {
  flex: 1;
  min-height: 0;
  display: flex;
}
.canvas {
  flex: 1;
  background: #000;
  border-top: 1px solid #c9c9c9;
  border-left: 1px solid #c9c9c9;
  border-bottom: 1px solid #c9c9c9;
  overflow: hidden;
}
.board {
  display: block;
  width: 1454px;
  height: 720px;
}
.vscroll {
  width: 13px;
  flex: none;
  background: #222;
  display: flex;
  flex-direction: column;
  align-items: center;
  border-left: 1px solid #555;
  box-sizing: border-box;
}
.vthumb {
  flex: 1;
  width: 100%;
  background: #4a4a4a;
  margin: 14px 0 20px;
}
.arrow-up,
.arrow-down,
.arrow-left,
.arrow-right {
  display: block;
  width: 0;
  height: 0;
  flex: none;
  border: 5px solid transparent;
}
.arrow-up { border-bottom: 7px solid #aaa; margin-top: 2px; }
.arrow-down { border-top: 7px solid #aaa; margin-bottom: 6px; }
.arrow-left { border-right: 7px solid #aaa; margin: 0 70px 0 0; }
.arrow-right { border-left: 7px solid #aaa; margin: 0 20px 0 70px; }
.arrow-next {
  display: block;
  width: 0;
  height: 0;
  margin-left: 4px;
  border: 5px solid transparent;
  border-left: 7px solid #eee;
}

.hscroll {
  height: 14px;
  flex: none;
  box-sizing: border-box;
  background: #222;
  display: flex;
  align-items: center;
  padding-left: 4px;
  border-bottom: 1px solid #c9c9c9;
}
.hthumb {
  flex: 1;
  height: 13px;
  background: #4a4a4a;
}
.selbar {
  height: 36px;
  flex: none;
  box-sizing: border-box;
  display: flex;
  background: #333;
  border-top: 2px solid #222;
  border-bottom: 1px solid #c9c9c9;
}
.sel-box {
  width: 161px;
  flex: none;
  display: flex;
  align-items: center;
  border-right: 2px solid #bbb;
  border-left: 1px solid #222;
  box-sizing: border-box;
  padding-left: 3px;
}
.sel-btn {
  width: 23px;
  height: 24px;
  margin-right: 5px;
  background: #3f3f3f;
}
.sel-btn svg {
  display: block;
  width: 100%;
  height: 100%;
}
.sel-text {
  font-size: 15px;
  color: #ccc;
  margin: 0 0 3px -1px;
}
.sel-more {
  width: 15px;
  height: 20px;
  margin: 6px 0 0 2px;
  background: #3f3f3f;
  display: flex;
  align-items: center;
}

.splitter {
  width: 7px;
  flex: none;
  background: linear-gradient(90deg, #777, #bbb 30%, #555 60%, #aaa);
}

.panel {
  width: 223px;
  flex: none;
  display: flex;
  flex-direction: column;
  background: #333;
}
.panel-title {
  height: 22px;
  flex: none;
  box-sizing: border-box;
  background: #222;
  display: flex;
  align-items: center;
  gap: 6px;
  padding: 0 0 5px 2px;
  font-size: 15px;
  color: #c0c0c0;
}
.panel-title span {
  margin-bottom: 2px;
}
.panel-close {
  width: 8px;
  height: 12px;
  margin-left: auto;
  background: #aaa;
}
.panel-tools {
  height: 24px;
  flex: none;
  display: flex;
  gap: 2px;
  padding-left: 2px;
  background: #222;
}
.ptool {
  width: 26px;
  height: 23px;
  flex: none;
}
.ptool svg {
  display: block;
  width: 100%;
  height: 100%;
}
.ptool.wide {
  flex: 1;
  background: #414141;
  display: flex;
  align-items: center;
  gap: 5px;
  padding-left: 12px;
  font-size: 15px;
}
.ptool.wide svg {
  width: 18px;
  height: 16px;
  flex: none;
}
.layer-head {
  height: 26px;
  flex: none;
  margin-top: 2px;
  display: flex;
  gap: 2px;
  padding-left: 3px;
  background: #d8d8d8;
  padding-right: 10px;
}
.hcell {
  background: #222;
  display: flex;
  align-items: center;
  justify-content: center;
  flex: none;
  color: #c8c8c8;
  font-size: 15px;
}
.c1 { width: 16px; }
.c2 { width: 20px; }
.c3 { width: 10px; }
.c4 { width: 102px; justify-content: flex-start; letter-spacing: 0.6px; padding: 0 0 2px 1px; box-sizing: border-box; }
.c5 { width: 18px; }
.c6 { width: 14px; }
.c7 { width: 20px; }

.layer-list {
  flex: 1;
  min-height: 0;
  position: relative;
  overflow: hidden;
  background: #eee;
}
.rows {
  margin-top: -5.2px;
}
.lrow {
  height: 23.87px;
  display: flex;
  align-items: center;
  color: #2a2a2a;
  font-size: 15px;
}
.check {
  width: 16px;
  height: 100%;
  margin-left: 3px;
  flex: none;
  box-sizing: border-box;
  border: 1px solid #b5b5b5;
  background: #efefef;
  display: flex;
  align-items: center;
  justify-content: center;
}
.check i {
  width: 8px;
  height: 8px;
  background: #e6efe6;
}
.check.on {
  background: #ff0000;
  border-color: #ff0000;
}
.affect {
  width: 36px;
  flex: none;
  height: 100%;
}
.affect-on {
  width: 18px;
  height: 22px;
  margin: 1px 0 0 2px;
  background: #ffff00;
  display: flex;
  align-items: center;
  justify-content: center;
}
.lname {
  width: 102px;
  height: 100%;
  flex: none;
  box-sizing: border-box;
  border-left: 1px solid #222;
  border-right: 1px solid #222;
  border-bottom: 1px solid #222;
  padding: 0 4px;
  display: flex;
  align-items: center;
  white-space: nowrap;
  overflow: hidden;
}
.lname span {
  padding-left: 2px;
}
.lname .plate {
  flex: 1;
  background: #eee;
  line-height: 16px;
}
.teal { background: #9cdadb; }
.cream { background: #ffffcc; }
.white { background: #fff; }
.sea { background: #00a07a; }
.amber { background: #fcc24f; }
.lock {
  width: 13px;
  margin-left: 2px;
  flex: none;
  display: flex;
}
.lplus {
  margin-left: 8px;
  flex: none;
  display: flex;
}
.over-bar {
  position: absolute;
  top: 375px;
  bottom: 0;
  width: 7px;
}
.over-bar.one {
  left: 133px;
  background: #95aab5;
}
.over-bar.two {
  left: 144px;
  background: #cfcfcf;
}
.list-scroll {
  position: absolute;
  right: 0;
  top: 0;
  bottom: 0;
  width: 8px;
  background: #e2e2e2;
}
.list-scroll i {
  display: block;
  width: 100%;
  height: 14px;
  margin-top: 25px;
  background: #aaa;
}
.tabs {
  height: 38px;
  flex: none;
  display: flex;
  align-items: flex-end;
  gap: 2px;
  padding-bottom: 2px;
  background: #000;
  box-sizing: border-box;
  border-top: 2px solid #cfcfcf;
}
.tab {
  width: 99px;
  height: 31px;
  background: #aaa;
  color: #333;
  text-align: center;
  line-height: 27px;
  font-size: 15px;
}
.tab.cur {
  height: 36px;
  background: #eee;
  line-height: 34px;
  margin-bottom: -2px;
}

.status {
  height: 22px;
  flex: none;
  display: flex;
  align-items: center;
  background: #333;
  font-size: 15px;
  color: #ccc;
}
.grip.tiny {
  width: 4px;
  height: 20px;
  margin-left: 1px;
}
.scripts {
  width: 65px;
  padding: 0 0 2px 1px;
  box-sizing: border-box;
}
.script-input {
  width: 228px;
  height: 21px;
  background: #0a0a0a;
  display: flex;
  justify-content: flex-end;
}
.dd {
  width: 15px;
  background: #fff;
  display: flex;
  align-items: center;
  justify-content: center;
}
.sbtn {
  width: 35px;
  height: 21px;
  margin-left: 2px;
  background: #9d9d9d;
}
.sbtn svg {
  display: block;
  width: 100%;
  height: 100%;
}
.sbtn.dark {
  background: #3f3f3f;
  margin-left: 8px;
  width: 34px;
}
.sbtn.dark.first {
  width: 28px;
  margin-left: 8px;
}
.status-sep {
  width: 4px;
  height: 22px;
  margin-left: 9px;
  background: #1b1b1b;
}
.xy {
  margin: 0 0 2px 6px;
  width: 35px;
}
.xy-input {
  width: 321px;
  height: 21px;
  background: #0a0a0a;
}
.hint {
  margin: 0 0 2px 6px;
  white-space: nowrap;
}

.tooltip {
  position: absolute;
  left: 1229px;
  top: 886px;
  width: 182px;
  height: 25px;
  box-sizing: border-box;
  border: 1px solid #222;
  background: #ccc;
  color: #222;
  font-size: 15px;
  line-height: 19px;
  text-align: center;
  white-space: nowrap;
}

.dialog {
  position: absolute;
  left: 447px;
  top: 219px;
  width: 382px;
  height: 249px;
  box-sizing: border-box;
  border: 2px solid #b5b5b5;
  padding: 2px 4px 0;
  background: #ededed;
  font-size: 15px;
  color: #444;
}
.dlg-title {
  height: 17px;
  margin: 0 -4px 4px;
  padding-left: 4px;
  background: #222;
  color: #bbb;
  display: flex;
  align-items: center;
  gap: 6px;
}
.dlg-title span {
  margin-bottom: 5px;
}
.dlg-close {
  width: 12px;
  height: 12px;
  margin-left: auto;
  margin-right: 3px;
  background: #aaa;
  display: flex;
  align-items: center;
  justify-content: center;
}
.feature-row {
  display: flex;
  gap: 2px;
}
.fbtn {
  flex: 1;
  height: 32px;
  display: flex;
  align-items: center;
  justify-content: center;
  color: #fff;
  font-size: 26px;
}
.fbtn svg {
  width: 32px;
  height: 32px;
}
.activate {
  height: 23px;
  margin-top: 2px;
  background: #3a3a3a;
  color: #ccc;
  text-align: center;
  line-height: 20px;
}
.d-row {
  display: flex;
  align-items: center;
}
.d-row > span {
  margin-bottom: 5px;
}
.dbtn {
  flex: none;
  height: 22px;
  box-sizing: border-box;
  padding-bottom: 3px;
  background: #414141;
  color: #ddd;
  display: flex;
  align-items: center;
  justify-content: center;
}
.dbtn svg {
  margin-bottom: -3px;
}
.field {
  flex: none;
  height: 22px;
  box-sizing: border-box;
  background: #fff;
  border: 1px solid #bbb;
  color: #333;
  display: flex;
  align-items: center;
  padding-left: 4px;
  padding-bottom: 2px;
}
.r-symbol { margin-top: 6px; height: 22px; }
.w-symbol { margin-left: 2px; width: 202px; }
.w-dots { margin-left: 3px; width: 23px; }
.w-pick { margin-left: 2px; width: 26px; }
.w-shape { margin-left: 4px; width: 25px; }
.w-plus { margin-left: 29px; width: 23px; font-size: 18px; background: #f77f4c; color: #fff; }
.w-minus { margin-left: 3px; width: 25px; font-size: 18px; }

.r-labels { margin-top: 4px; height: 18px; padding-left: 69px; }
.lb-angle { width: 112px; }
.lb-resize { width: 80px; }

.r-values { margin-top: 2px; height: 22px; }
.w-mir { margin-left: 3px; width: 26px; }
.w-mir2 { margin-left: 2px; width: 25px; }
.w-angle { margin-left: 13px; width: 86px; padding-left: 6px; justify-content: space-between; padding-right: 2px; }
.w-angle svg { margin-top: 2px; }
.w-aicon { margin-left: 3px; width: 21px; height: 22px; flex: none; }
.w-resize { margin-left: 2px; width: 41px; }
.w-inch { margin-left: 6px; width: 29px; flex: none; }
.w-sx { margin-left: 4px; width: 52px; padding-left: 5px; }
.w-sy { margin-left: 1px; width: 54px; padding-left: 5px; }

.r-attr { margin-top: 7px; height: 23px; }
.w-attr { margin-left: 2px; width: 65px; flex: none; white-space: nowrap; }
.w-attrinput { margin-left: 2px; width: 228px; height: 23px; }
.w-adots { margin-left: 2px; width: 24px; }
.w-apick { margin-left: 4px; width: 40px; }

.r-nest { margin-top: 7px; height: 21px; }
.cbox {
  width: 16px;
  height: 16px;
  margin-left: 2px;
  flex: none;
  background: #fff;
  border: 1px solid #bbb;
}
.cbox.off {
  background: #e4e8e4;
}
.w-nlabel { margin-left: 4px; width: 132px; color: #b5b5b5; flex: none; white-space: nowrap; }
.w-ninput { margin-left: 7px; width: 173px; height: 21px; background: #ededed; }
.w-nbtn { margin-left: 6px; width: 26px; height: 21px; background: #a8a8a8; }

.r-bottom {
  margin: 7px -4px 0;
  padding: 0 4px;
  height: 26px;
  background: #ccc;
  color: #222;
}
.w-mlabel { margin-left: 4px; flex: none; }
.w-ok { margin-left: auto; width: 56px; height: 25px; }
.w-apply { margin-left: 3px; width: 55px; height: 25px; background: #007fa8; color: #eee; }
.w-closebtn { margin-left: 4px; width: 55px; height: 25px; }

.arrows {
  position: absolute;
  left: 0;
  top: 0;
  pointer-events: none;
}
.note {
  position: absolute;
  transform: translateY(-50%);
  font: 21.2px/28px "Noto Sans CJK SC", sans-serif;
  color: #e8402f;
  white-space: nowrap;
  pointer-events: none;
}
.watermark {
  position: absolute;
  left: 1486px;
  top: 868px;
  font: 32.5px/42px "Noto Sans", "Noto Sans CJK SC", sans-serif;
  color: rgba(195, 195, 195, 0.8);
  white-space: nowrap;
  pointer-events: none;
}
</style>
